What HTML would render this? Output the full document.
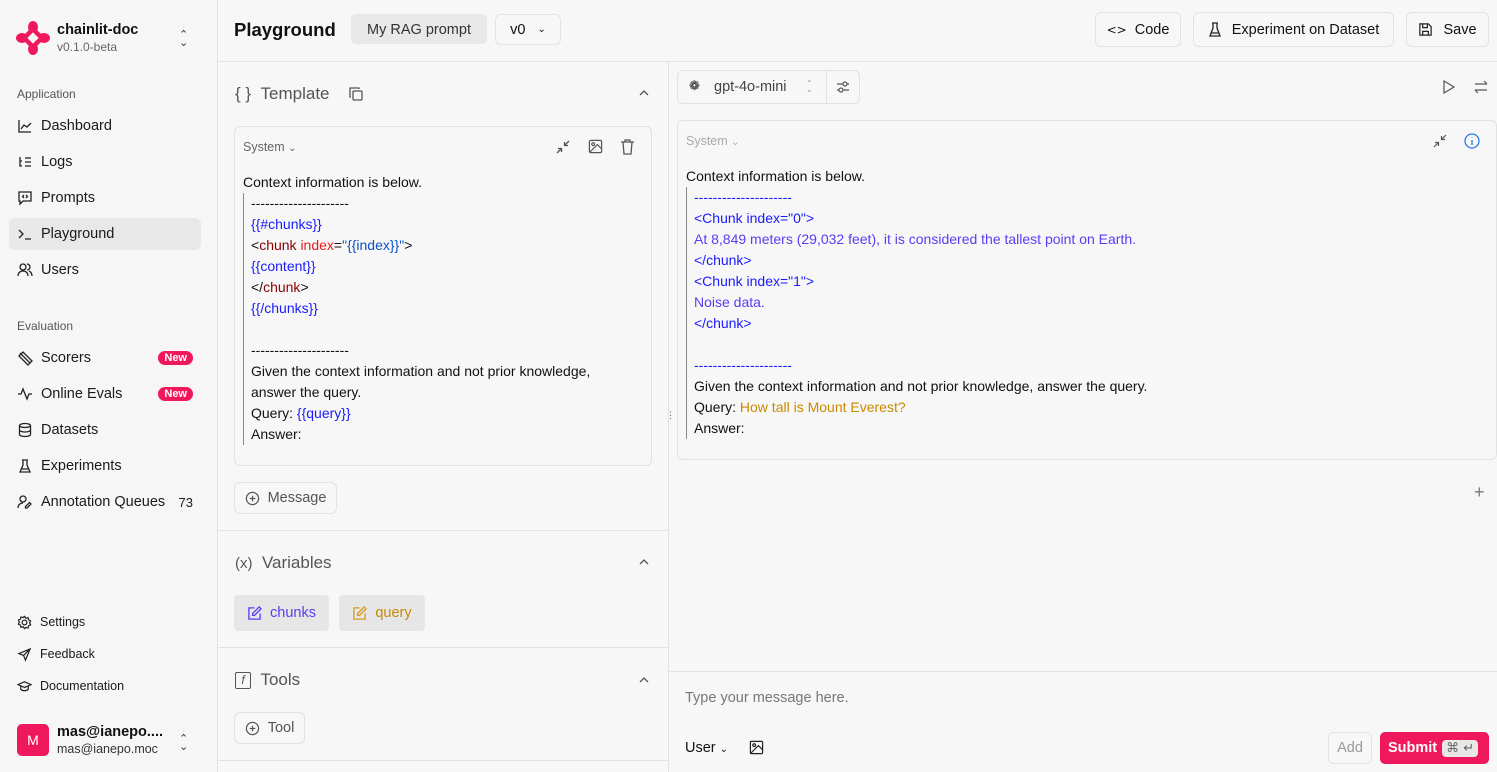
<!DOCTYPE html>
<html><head><meta charset="utf-8"><style>
*{box-sizing:border-box;margin:0;padding:0}
body{width:1497px;height:772px;overflow:hidden;background:#f7f7f7;font-family:"Liberation Sans",sans-serif;color:#111;font-size:14px;position:relative}
.abs{position:absolute}
svg{display:block}
.side{left:0;top:0;width:218px;height:772px;border-right:1px solid #e3e3e3;background:#f6f6f6}
.nav{position:absolute;left:9px;width:192px;height:32px;display:flex;align-items:center;padding-left:8px;font-size:14.5px;color:#1a1a1a}
.nav svg{margin-right:8px}
.sec{position:absolute;left:17px;font-size:12px;color:#555}
.badge{position:absolute;right:8px;background:#f0185c;color:#fff;font-size:11px;font-weight:bold;border-radius:9px;padding:1px 6px}
.btn{position:absolute;border:1px solid #e2e2e2;border-radius:6px;background:#f7f7f7;display:flex;align-items:center;justify-content:center;font-size:14.5px;color:#111}
.hd{font-size:17px;color:#555}
.line{position:absolute;background:#e3e3e3}
.code{font-size:14px;line-height:21px}
.b{color:#1a1aff}.r{color:#e81c1c}.dr{color:#8b0000}.bl{color:#0b52c8}.o{color:#c98a00}.pu{color:#5b3cf2}
.chev{font-size:11px;line-height:8px;color:#333}
</style></head><body>

<div class="abs side"></div>
<svg class="abs" style="left:16px;top:21px" width="34" height="34" viewBox="0 0 34 34"><g fill="#f0185c"><ellipse cx="17" cy="6" rx="5" ry="6"/><ellipse cx="17" cy="28" rx="5" ry="6"/><ellipse cx="6" cy="17" rx="6" ry="5"/><ellipse cx="28" cy="17" rx="6" ry="5"/><path d="M9 13 L13 9 L21 9 L25 13 L25 21 L21 25 L13 25 L9 21Z"/></g><rect x="13" y="13" width="8" height="8" fill="#f6f6f6" transform="rotate(45 17 17)"/></svg>
<div class="abs" style="left:57px;top:22px;font-weight:bold;font-size:14.5px">chainlit-doc</div>
<div class="abs" style="left:57px;top:40px;font-size:12px;color:#666">v0.1.0-beta</div>
<div class="abs chev" style="left:179px;top:31px">⌃<br>⌄</div>
<div class="sec" style="top:87px">Application</div>
<div class="nav" style="top:110px"><svg width="16" height="16" viewBox="0 0 16 16" fill="none" stroke="#222" stroke-width="1.3"><path d="M2 2v12h12M4 11l3-4 3 2 4-4"/></svg>Dashboard</div>
<div class="nav" style="top:146px"><svg width="16" height="16" viewBox="0 0 16 16" fill="none" stroke="#222" stroke-width="1.3"><path d="M3 3v9h2M3 7h2M8 4h6M8 8h6M8 12h6"/></svg>Logs</div>
<div class="nav" style="top:182px"><svg width="16" height="16" viewBox="0 0 16 16" fill="none" stroke="#222" stroke-width="1.3"><path d="M2 2h12v9H6l-3 3v-3H2z M7 5l-1.5 1.5L7 8M9 5l1.5 1.5L9 8"/></svg>Prompts</div>
<div class="nav" style="top:218px;background:#e8e8e8;border-radius:6px"><svg width="16" height="16" viewBox="0 0 16 16" fill="none" stroke="#222" stroke-width="1.3"><path d="M2 4l4 4-4 4M8 13h6"/></svg>Playground</div>
<div class="nav" style="top:254px"><svg width="16" height="16" viewBox="0 0 16 16" fill="none" stroke="#222" stroke-width="1.3"><circle cx="6" cy="5" r="3"/><path d="M1 14c0-3 2-5 5-5s5 2 5 5M10 2a3 3 0 010 6M12 9c2 1 3 3 3 5"/></svg>Users</div>
<div class="sec" style="top:319px">Evaluation</div>
<div class="nav" style="top:342px"><svg width="16" height="16" viewBox="0 0 16 16" fill="none" stroke="#222" stroke-width="1.3"><path d="M3 3l10 10M2 6l4-4 9 9-4 4z"/></svg>Scorers<span class="badge">New</span></div>
<div class="nav" style="top:378px"><svg width="16" height="16" viewBox="0 0 16 16" fill="none" stroke="#222" stroke-width="1.3"><path d="M1 8h3l2-5 4 10 2-5h3"/></svg>Online Evals<span class="badge">New</span></div>
<div class="nav" style="top:414px"><svg width="16" height="16" viewBox="0 0 16 16" fill="none" stroke="#222" stroke-width="1.3"><ellipse cx="8" cy="3.5" rx="5.5" ry="2"/><path d="M2.5 3.5v9c0 1 2.5 2 5.5 2s5.5-1 5.5-2v-9M2.5 8c0 1 2.5 2 5.5 2s5.5-1 5.5-2"/></svg>Datasets</div>
<div class="nav" style="top:450px"><svg width="16" height="16" viewBox="0 0 16 16" fill="none" stroke="#222" stroke-width="1.3"><path d="M6 2v5l-3 7h10l-3-7V2M5 2h6M4 11h8"/></svg>Experiments</div>
<div class="nav" style="top:486px"><svg width="16" height="16" viewBox="0 0 16 16" fill="none" stroke="#222" stroke-width="1.3"><circle cx="6" cy="5" r="3"/><path d="M1 14c0-3 2-5 5-5M10 14l4-4-1.5-1.5-4 4V14z"/></svg>Annotation Queues<span style="position:absolute;right:8px;font-size:13px">73</span></div>
<div class="nav" style="top:606px;font-size:12.5px"><svg width="15" height="15" viewBox="0 0 16 16" fill="none" stroke="#222" stroke-width="1.3"><circle cx="8" cy="8" r="2.5"/><path d="M8 1.5l1.5 2 2.3-.7.5 2.4 2.2 1-1 2.2 1 2.2-2.2 1-.5 2.3-2.3-.6L8 14.5l-1.5-2-2.3.7-.5-2.4-2.2-1 1-2.2-1-2.2 2.2-1 .5-2.3 2.3.6z"/></svg>Settings</div>
<div class="nav" style="top:638px;font-size:12.5px"><svg width="15" height="15" viewBox="0 0 16 16" fill="none" stroke="#222" stroke-width="1.3"><path d="M14 2L2 7l5 2 2 5zM7 9l7-7"/></svg>Feedback</div>
<div class="nav" style="top:670px;font-size:12.5px"><svg width="15" height="15" viewBox="0 0 16 16" fill="none" stroke="#222" stroke-width="1.3"><path d="M1 6l7-3 7 3-7 3zM4 7.5V11c2 2 6 2 8 0V7.5"/></svg>Documentation</div>
<div class="abs" style="left:17px;top:724px;width:32px;height:32px;border-radius:5px;background:#f0185c;color:#fff;display:flex;align-items:center;justify-content:center;font-size:14px">M</div>
<div class="abs" style="left:57px;top:724px;font-weight:bold;font-size:14.5px">mas@ianepo....</div>
<div class="abs" style="left:57px;top:742px;font-size:12.5px;color:#333">mas@ianepo.moc</div>
<div class="abs chev" style="left:179px;top:735px">⌃<br>⌄</div>

<div class="abs" style="left:234px;top:19px;font-size:18.5px;font-weight:bold">Playground</div>
<div class="abs" style="left:351px;top:14px;width:136px;height:30px;background:#e8e8e8;border-radius:5px;display:flex;align-items:center;justify-content:center;font-size:14.5px;color:#333;padding-top:2px">My RAG prompt</div>
<div class="btn" style="left:495px;top:14px;width:66px;height:31px">v0&nbsp;&nbsp;&nbsp;<span style="font-size:10px">⌄</span></div>
<div class="btn" style="left:1095px;top:12px;width:86px;height:35px"><span style="font-family:'DejaVu Sans';font-size:12px;margin-right:8px">&lt;&gt;</span>Code</div>
<div class="btn" style="left:1193px;top:12px;width:201px;height:35px"><svg width="14" height="16" viewBox="0 0 14 16" fill="none" stroke="#222" stroke-width="1.3" style="margin-right:10px"><path d="M5 1v5l-3 8h10L9 6V1M4 1h6M3 11h8"/></svg>Experiment on Dataset</div>
<div class="btn" style="left:1406px;top:12px;width:83px;height:35px"><svg width="15" height="15" viewBox="0 0 16 16" fill="none" stroke="#222" stroke-width="1.3" style="margin-right:10px"><path d="M2 2h9l3 3v9H2zM5 2v4h5V2M5 14V10h6v4"/></svg>Save</div>
<div class="line" style="left:218px;top:61px;width:1279px;height:1px"></div>

<div class="line" style="left:668px;top:61px;width:1px;height:711px"></div>
<div class="abs hd" style="left:235px;top:84px">{ }&nbsp;&nbsp;Template</div>
<svg class="abs" style="left:348px;top:86px" width="16" height="16" viewBox="0 0 16 16" fill="none" stroke="#555" stroke-width="1.3"><rect x="5" y="5" width="9" height="9" rx="1"/><path d="M3 11H2V2h9v1"/></svg>
<svg class="abs" style="left:638px;top:89px" width="12" height="8" viewBox="0 0 12 8" fill="none" stroke="#555" stroke-width="1.3"><path d="M2 6l4-4 4 4"/></svg>
<div class="abs" style="left:234px;top:126px;width:418px;height:340px;border:1px solid #e2e2e2;border-radius:6px"></div>
<div class="abs" style="left:243px;top:140px;font-size:12.5px;color:#666">System <span style="font-size:10px">⌄</span></div>
<svg class="abs" style="left:556px;top:140px" width="14" height="14" viewBox="0 0 14 14" fill="none" stroke="#555" stroke-width="1.3"><path d="M1 13l4.5-4.5M2 8.5h3.5V12M13 1L8.5 5.5M8.5 2v3.5H12"/></svg>
<svg class="abs" style="left:588px;top:139px" width="15" height="15" viewBox="0 0 16 16" fill="none" stroke="#555" stroke-width="1.3"><rect x="1.5" y="1.5" width="13" height="13" rx="1.5"/><circle cx="5.5" cy="5.5" r="1.5"/><path d="M14 10l-4-4-8 8"/></svg>
<svg class="abs" style="left:620px;top:139px" width="15" height="16" viewBox="0 0 15 16" fill="none" stroke="#555" stroke-width="1.3"><path d="M1 3h13M5 3V1h5v2M3 3l1 12h7l1-12"/></svg>
<div class="abs code" style="left:243px;top:172px">Context information is below.</div>
<div class="abs" style="left:243px;top:193px;width:1px;height:252px;background:#888"></div>
<div class="abs code" style="left:251px;top:193px">
---------------------<br><span class="b">{{#chunks}}</span><br>&lt;<span class="dr">chunk</span> <span class="r">index</span>=<span class="bl">"{{index}}"</span>&gt;<br><span class="b">{{content}}</span><br>&lt;/<span class="dr">chunk</span>&gt;<br><span class="b">{{/chunks}}</span><br><br>---------------------<br>Given the context information and not prior knowledge,<br>answer the query.<br>Query: <span class="b">{{query}}</span><br>Answer:</div>
<div class="btn" style="left:234px;top:482px;width:103px;height:32px;color:#555"><svg width="15" height="15" viewBox="0 0 16 16" fill="none" stroke="#555" stroke-width="1.3" style="margin-right:8px"><circle cx="8" cy="8" r="6.5"/><path d="M8 5v6M5 8h6"/></svg>Message</div>
<div class="line" style="left:218px;top:530px;width:450px;height:1px"></div>
<div class="abs hd" style="left:235px;top:553px"><span style="font-size:15px">(x)</span>&nbsp;&nbsp;Variables</div>
<svg class="abs" style="left:638px;top:558px" width="12" height="8" viewBox="0 0 12 8" fill="none" stroke="#555" stroke-width="1.3"><path d="M2 6l4-4 4 4"/></svg>
<div class="abs" style="left:234px;top:595px;width:95px;height:36px;background:#e6e6e6;border-radius:4px;display:flex;align-items:center;justify-content:center;font-size:14.5px" ><svg width="15" height="15" viewBox="0 0 16 16" fill="none" stroke="#5b3cf2" stroke-width="1.4" style="margin-right:8px"><path d="M8 2H2v12h12V8M6 10V8l7-7 2 2-7 7z"/></svg><span class="pu">chunks</span></div>
<div class="abs" style="left:339px;top:595px;width:86px;height:36px;background:#e6e6e6;border-radius:4px;display:flex;align-items:center;justify-content:center;font-size:14.5px"><svg width="15" height="15" viewBox="0 0 16 16" fill="none" stroke="#d99a1a" stroke-width="1.4" style="margin-right:8px"><path d="M8 2H2v12h12V8M6 10V8l7-7 2 2-7 7z"/></svg><span class="o">query</span></div>
<div class="line" style="left:218px;top:647px;width:450px;height:1px"></div>
<div class="abs hd" style="left:235px;top:670px"><span style="display:inline-block;border:1.3px solid #555;border-radius:2px;width:16px;height:17px;font-size:12px;text-align:center;font-style:italic;line-height:15px;vertical-align:1px">f</span>&nbsp;&nbsp;Tools</div>
<svg class="abs" style="left:638px;top:676px" width="12" height="8" viewBox="0 0 12 8" fill="none" stroke="#555" stroke-width="1.3"><path d="M2 6l4-4 4 4"/></svg>
<div class="btn" style="left:234px;top:712px;width:71px;height:32px;color:#555"><svg width="15" height="15" viewBox="0 0 16 16" fill="none" stroke="#555" stroke-width="1.3" style="margin-right:8px"><circle cx="8" cy="8" r="6.5"/><path d="M8 5v6M5 8h6"/></svg>Tool</div>
<div class="line" style="left:218px;top:760px;width:450px;height:1px"></div>
<div class="abs" style="left:666px;top:414px;font-size:9px;color:#666;line-height:3px">⋮</div>

<div class="abs" style="left:677px;top:70px;width:183px;height:34px;border:1px solid #e2e2e2;border-radius:6px"></div>
<div class="abs" style="left:826px;top:71px;width:1px;height:32px;background:#e2e2e2"></div>
<div class="abs" style="left:689px;top:79px;font-size:13px;font-family:'DejaVu Sans'">❁</div>
<div class="abs" style="left:714px;top:79px;font-size:14.5px;color:#444">gpt-4o-mini</div>
<div class="abs" style="left:806px;top:81px;font-size:8px;line-height:6px;color:#999">⌃<br>⌄</div>
<svg class="abs" style="left:836px;top:80px" width="14" height="14" viewBox="0 0 14 14" fill="none" stroke="#555" stroke-width="1.2"><path d="M1 4h6M11 4h2M1 10h2M7 10h6"/><circle cx="9" cy="4" r="2"/><circle cx="5" cy="10" r="2"/></svg>
<svg class="abs" style="left:1442px;top:80px" width="14" height="14" viewBox="0 0 14 14" fill="none" stroke="#555" stroke-width="1.2"><path d="M2 1l10 6-10 6z"/></svg>
<svg class="abs" style="left:1474px;top:80px" width="14" height="14" viewBox="0 0 14 14" fill="none" stroke="#555" stroke-width="1.2"><path d="M1 4h12M10 1l3 3M13 10H1M4 13l-3-3"/></svg>
<div class="abs" style="left:677px;top:120px;width:820px;height:340px;border:1px solid #e2e2e2;border-radius:6px"></div>
<div class="abs" style="left:686px;top:134px;font-size:12.5px;color:#aaa">System <span style="font-size:10px">⌄</span></div>
<svg class="abs" style="left:1433px;top:134px" width="14" height="14" viewBox="0 0 14 14" fill="none" stroke="#555" stroke-width="1.2"><path d="M1 13l4.5-4.5M2 8.5h3.5V12M13 1L8.5 5.5M8.5 2v3.5H12"/></svg>
<svg class="abs" style="left:1464px;top:133px" width="16" height="16" viewBox="0 0 16 16" fill="none" stroke="#2a7be4" stroke-width="1.3"><circle cx="8" cy="8" r="7"/><path d="M8 7v5M8 4.5v.5"/></svg>
<div class="abs code" style="left:686px;top:166px">Context information is below.</div>
<div class="abs" style="left:686px;top:187px;width:1px;height:252px;background:#888"></div>
<div class="abs code" style="left:694px;top:187px"><span class="b">---------------------<br>&lt;Chunk index="0"&gt;</span><br><span class="pu">At 8,849 meters (29,032 feet), it is considered the tallest point on Earth.</span><br><span class="b">&lt;/chunk&gt;<br>&lt;Chunk index="1"&gt;</span><br><span class="pu">Noise data.</span><br><span class="b">&lt;/chunk&gt;</span><br><br><span class="b">---------------------</span><br>Given the context information and not prior knowledge, answer the query.<br>Query: <span class="o">How tall is Mount Everest?</span><br>Answer:</div>
<div class="abs" style="left:1474px;top:482px;font-size:18px;color:#777">+</div>
<div class="line" style="left:669px;top:671px;width:828px;height:1px"></div>
<div class="abs" style="left:685px;top:690px;font-size:14.5px;color:#777">Type your message here.</div>
<div class="abs" style="left:685px;top:740px;font-size:14.5px">User <span style="font-size:10px">⌄</span></div>
<svg class="abs" style="left:749px;top:740px" width="15" height="15" viewBox="0 0 16 16" fill="none" stroke="#222" stroke-width="1.3"><rect x="1.5" y="1.5" width="13" height="13" rx="1"/><circle cx="5.5" cy="5.5" r="1.5"/><path d="M14 10l-4-4-8 8"/></svg>
<div class="btn" style="left:1328px;top:732px;width:44px;height:32px;color:#999">Add</div>
<div class="abs" style="left:1380px;top:732px;width:109px;height:32px;background:#f0185c;border-radius:5px;color:#fff;font-size:14.5px;font-weight:bold;display:flex;align-items:center;padding-left:8px">Submit<span style="margin-left:5px;background:#e8e8e8;color:#666;border-radius:4px;font-weight:normal;font-size:13px;padding:1px 4px;font-family:'DejaVu Sans'">⌘ ↵</span></div>
</body></html>
